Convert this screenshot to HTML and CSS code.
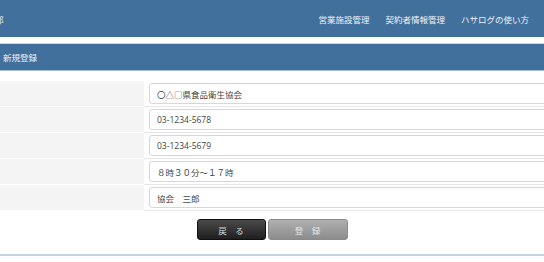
FILE: index.html
```html
<!DOCTYPE html>
<html lang="ja">
<head>
    <meta charset="UTF-8">
    <title>新規登録</title>
    <link rel="stylesheet" href="styles.css">
</head>
<body>
    <header class="topbar">
        <span class="brand">部</span>
        <nav class="menu">
            <a href="#">営業施設管理</a>
            <a href="#">契約者情報管理</a>
            <a href="#">ハサログの使い方</a>
        </nav>
    </header>

    <div class="subbar">新規登録</div>

    <form class="entry">
        <div class="row">
            <label class="label"></label>
            <div class="field"><input type="text" value="〇△□県食品衛生協会"></div>
        </div>
        <div class="row">
            <label class="label"></label>
            <div class="field"><input type="text" value="03-1234-5678"></div>
        </div>
        <div class="row">
            <label class="label"></label>
            <div class="field"><input type="text" value="03-1234-5679"></div>
        </div>
        <div class="row">
            <label class="label"></label>
            <div class="field"><input type="text" value="８時３０分～１７時"></div>
        </div>
        <div class="row">
            <label class="label"></label>
            <div class="field"><input type="text" value="協会　三郎"></div>
        </div>

        <div class="actions">
            <button type="button" class="btn back">戻　る</button>
            <button type="button" class="btn submit">登　録</button>
        </div>
    </form>

    <div class="footer-line"></div>
</body>
</html>
```

FILE: styles.css
```css
body {
    margin: 0;
    font-family: 'Open Sans', 'Noto Sans CJK JP', sans-serif;
    font-size: 8.5px;
    color: #444;
    background: #fff;
    overflow: hidden;
}

.topbar {
    height: 37px;
    background-color: #42709d;
    display: flex;
    justify-content: space-between;
    align-items: center;
    padding-right: 15px;
    color: #eef2f7;
}

.brand {
    margin-left: -5px;
    white-space: nowrap;
}

.menu {
    display: flex;
    gap: 16px;
}

.menu a {
    color: #eef2f7;
    text-decoration: none;
}

.subbar {
    margin-top: 6px;
    height: 26px;
    border-top: 1px solid #c9d5e2;
    border-bottom: 1px solid #a9bdd2;
    background-color: #42709d;
    color: #eef2f7;
    display: flex;
    align-items: center;
    padding-left: 3px;
}

.entry {
    margin-top: 10px;
}

.row {
    display: grid;
    grid-template-columns: 144px 1fr;
}

.label {
    background-color: #f4f4f4;
    border-bottom: 1px solid #fff;
}

.field {
    padding: 2px 0 2px 5px;
    border-bottom: 1px solid #e6e6ea;
}

.field input {
    box-sizing: border-box;
    width: 440px;
    height: 21px;
    padding: 0 7px;
    border: 1px solid #d6d6dc;
    border-radius: 3px;
    font-family: inherit;
    font-size: 8.5px;
    color: #444;
    outline: none;
}

.actions {
    display: flex;
    justify-content: center;
    gap: 2px;
    margin-top: 8px;
}

.btn {
    height: 21px;
    border-radius: 3px;
    font-family: inherit;
    font-size: 8.5px;
    padding: 0;
    cursor: pointer;
}

.btn.back {
    width: 69px;
    background: linear-gradient(#4a4a4a, #1f1f1f);
    border: 1px solid #111;
    color: #d8d8d8;
}

.btn.submit {
    width: 80px;
    background: linear-gradient(#b0b0b0, #8c8c8c);
    border: 1px solid #8a8a8a;
    color: #e6e6e6;
}

.footer-line {
    margin-top: 14px;
    height: 2px;
    background-color: #c4d4e6;
}
```
